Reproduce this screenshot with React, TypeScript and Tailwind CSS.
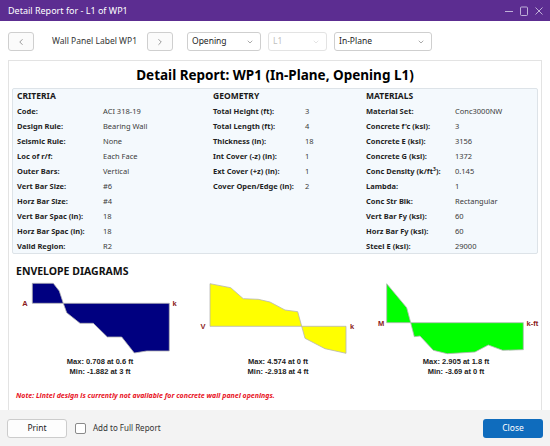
import { ChevronLeft, ChevronRight, ChevronDown } from "lucide-react";

const font = { fontFamily: '"Noto Sans", "Open Sans", sans-serif' };

type Row = [React.ReactNode, React.ReactNode];

const criteria: Row[] = [
  ["Code:", "ACI 318-19"],
  ["Design Rule:", "Bearing Wall"],
  ["Seismic Rule:", "None"],
  ["Loc of r/f:", "Each Face"],
  ["Outer Bars:", "Vertical"],
  ["Vert Bar Size:", "#6"],
  ["Horz Bar Size:", "#4"],
  ["Vert Bar Spac (in):", "18"],
  ["Horz Bar Spac (in):", "18"],
  ["Valid Region:", "R2"],
];

const geometry: Row[] = [
  ["Total Height (ft):", "3"],
  ["Total Length (ft):", "4"],
  ["Thickness (in):", "18"],
  ["Int Cover (-z) (in):", "1"],
  ["Ext Cover (+z) (in):", "1"],
  ["Cover Open/Edge (in):", "2"],
];

const materials: Row[] = [
  ["Material Set:", "Conc3000NW"],
  ["Concrete f'c (ksi):", "3"],
  ["Concrete E (ksi):", "3156"],
  ["Concrete G (ksi):", "1372"],
  [
    <span>
      Conc Density (k/ft<sup className="text-[5px]">3</sup>):
    </span>,
    "0.145",
  ],
  ["Lambda:", "1"],
  ["Conc Str Blk:", "Rectangular"],
  ["Vert Bar Fy (ksi):", "60"],
  ["Horz Bar Fy (ksi):", "60"],
  ["Steel E (ksi):", "29000"],
];

function Section({
  title,
  rows,
  width,
  labelWidth,
}: {
  title: string;
  rows: Row[];
  width: string;
  labelWidth: string;
}) {
  return (
    <div className={width}>
      <div className="h-[15px] flex items-center text-[8.5px] font-bold text-[#1a1a1a]">{title}</div>
      {rows.map(([label, value], i) => (
        <div key={i} className="h-[15px] flex items-center text-[7.5px]">
          <div className={`${labelWidth} font-bold text-[#1f1f1f]`}>{label}</div>
          <div className="text-[#3a3a3a]">{value}</div>
        </div>
      ))}
    </div>
  );
}

type Chart = {
  left: string;
  right: string;
  axis: number;
  fill: string;
  points: string;
  rightX: number;
  max: string;
  min: string;
};

const charts: Chart[] = [
  {
    left: "A",
    right: "k",
    axis: 24.3,
    fill: "#000080",
    points:
      "16.3,4.3 37.3,4.3 43.3,12 47.3,24.3 50.7,33.7 64,44.3 77.3,44.3 91.3,58 105.7,58 118.3,74 130.7,72 153.3,72 153.3,24.3 16.3,24.3",
    rightX: 156.5,
    max: "Max: 0.708 at 0.6 ft",
    min: "Min: -1.882 at 3 ft",
  },
  {
    left: "V",
    right: "k",
    axis: 47.3,
    fill: "#ffff00",
    points:
      "16,4.7 36.7,8.7 49.3,19.7 64.3,20.3 76,23 91,31 103.7,32.7 107.7,47.3 111,59.3 131,69.7 152,74.3 152,47.3 16,47.3",
    rightX: 156,
    max: "Max: 4.574 at 0 ft",
    min: "Min: -2.918 at 4 ft",
  },
  {
    left: "M",
    right: "k-ft",
    axis: 43.7,
    fill: "#00ff00",
    points:
      "14.7,4.7 34.7,28.7 38.7,43.7 42.3,57.7 48,57 61.3,71.3 75.3,74.7 103,73 116.3,66 130.7,71.3 151.3,70.7 151.3,43.7 14.7,43.7",
    rightX: 154.5,
    max: "Max: 2.905 at 1.8 ft",
    min: "Min: -3.69 at 0 ft",
  },
];

function Diagram({ c }: { c: Chart }) {
  return (
    <div className="w-[178px]">
      <svg width="178" height="78" viewBox="0 0 178 78">
        <polygon points={c.points} fill={c.fill} stroke="#b5b5b5" strokeWidth="0.8" />
        <text
          x="9"
          y={c.axis + 3}
          textAnchor="middle"
          fontSize="7.5"
          fontWeight="bold"
          fill="#8b1a1a"
          fontFamily="Liberation Sans, Arial, sans-serif"
        >
          {c.left}
        </text>
        <text
          x={c.rightX}
          y={c.axis + 3}
          fontSize="7.5"
          fontWeight="bold"
          fill="#8b1a1a"
          fontFamily="Liberation Sans, Arial, sans-serif"
        >
          {c.right}
        </text>
      </svg>
      <div
        className="ml-[16px] w-[136px] text-center text-[7.5px] leading-[10px] font-bold text-[#222]"
        style={{ fontFamily: '"Liberation Sans", Arial, sans-serif' }}
      >
        <div>{c.max}</div>
        <div>{c.min}</div>
      </div>
    </div>
  );
}

function SelectBox({ label, width, disabled }: { label: string; width: string; disabled?: boolean }) {
  return (
    <div
      className={`${width} h-[19px] rounded-[3px] border flex items-center justify-between pl-[4px] pr-[6px] text-[8.5px] ${
        disabled ? "border-[#e3e3e3] text-[#c0c0c0] bg-white" : "border-[#cfcfcf] text-[#222] bg-white"
      }`}
    >
      <span>{label}</span>
      <ChevronDown size={8} strokeWidth={1.5} className={disabled ? "text-[#c8c8c8]" : "text-[#555]"} />
    </div>
  );
}

export default function App() {
  return (
    <div className="w-[550px] h-[446px] bg-white flex flex-col overflow-hidden" style={font}>
      {/* title bar */}
      <div className="h-[21px] bg-[#5c2d91] flex items-center justify-between pl-[8px] pr-[6px]">
        <span className="text-[9px] text-white">Detail Report for - L1 of WP1</span>
        <div className="flex items-center gap-[5px] text-[#cbbfe0]">
          <svg width="10" height="10" viewBox="0 0 10 10">
            <line x1="1" y1="5.5" x2="9" y2="5.5" stroke="currentColor" strokeWidth="0.9" />
          </svg>
          <svg width="10" height="10" viewBox="0 0 10 10">
            <rect x="1.5" y="1" width="7" height="8.5" rx="1" fill="none" stroke="currentColor" strokeWidth="0.9" />
          </svg>
          <svg width="10" height="10" viewBox="0 0 10 10">
            <path d="M1.5 1.5 L8.5 8.5 M8.5 1.5 L1.5 8.5" stroke="currentColor" strokeWidth="0.9" />
          </svg>
        </div>
      </div>

      {/* toolbar */}
      <div className="h-[39px] flex items-center pl-[8px] pt-[2px]">
        <button className="w-[26px] h-[19px] rounded-[3px] border border-[#cfcfcf] bg-[#fbfbfb] flex items-center justify-center">
          <ChevronLeft size={10} strokeWidth={1.3} className="text-[#444]" />
        </button>
        <span className="ml-[18px] w-[95px] text-[8.5px] text-[#333]">Wall Panel Label WP1</span>
        <button className="w-[26px] h-[19px] rounded-[3px] border border-[#cfcfcf] bg-[#fbfbfb] flex items-center justify-center">
          <ChevronRight size={10} strokeWidth={1.3} className="text-[#444]" />
        </button>
        <div className="ml-[14px]">
          <SelectBox label="Opening" width="w-[74px]" />
        </div>
        <div className="ml-[7px]">
          <SelectBox label="L1" width="w-[59px]" disabled />
        </div>
        <div className="ml-[7px]">
          <SelectBox label="In-Plane" width="w-[98px]" />
        </div>
      </div>

      {/* content */}
      <div className="mx-[8px] flex-1 border border-b-0 border-[#e3e3e3] px-[3px] pt-[4px]">
        <div className="h-[20px] leading-[20px] text-center text-[13.5px] font-bold text-black">
          Detail Report: WP1 (In-Plane, Opening L1)
        </div>
        <div className="mt-[3px] h-[166px] bg-[#f4f9fd] border border-[#dde3e8] rounded-[2px] flex pl-[4px]">
          <Section title="CRITERIA" rows={criteria} width="w-[196px]" labelWidth="w-[86px]" />
          <Section title="GEOMETRY" rows={geometry} width="w-[153px]" labelWidth="w-[92px]" />
          <Section title="MATERIALS" rows={materials} width="flex-1" labelWidth="w-[89px]" />
        </div>
        <div className="mt-[10px] pl-[4px] text-[10.5px] leading-[14px] font-bold text-[#111]">ENVELOPE DIAGRAMS</div>
        <div className="mt-[1px] flex pl-[4px]">
          {charts.map((c) => (
            <Diagram key={c.left} c={c} />
          ))}
        </div>
        <div className="mt-[14px] pl-[4px] text-[7px] leading-[10px] font-bold italic text-[#e81123]">
          Note: Lintel design is currently not available for concrete wall panel openings.
        </div>
      </div>

      {/* footer */}
      <div className="h-[36px] bg-[#f3f3f3] flex items-center px-[7px]">
        <button className="w-[60px] h-[19px] rounded-[3px] border border-[#cccccc] bg-[#fdfdfd] text-[8.5px] text-[#222]">
          Print
        </button>
        <div className="ml-[8px] w-[11px] h-[11px] rounded-[2px] border border-[#8a8a8a] bg-white" />
        <span className="ml-[7px] text-[8px] text-[#333]">Add to Full Report</span>
        <button className="ml-auto w-[60px] h-[19px] rounded-[3px] bg-[#0f6cbd] text-[8.5px] text-white">
          Close
        </button>
      </div>
    </div>
  );
}
